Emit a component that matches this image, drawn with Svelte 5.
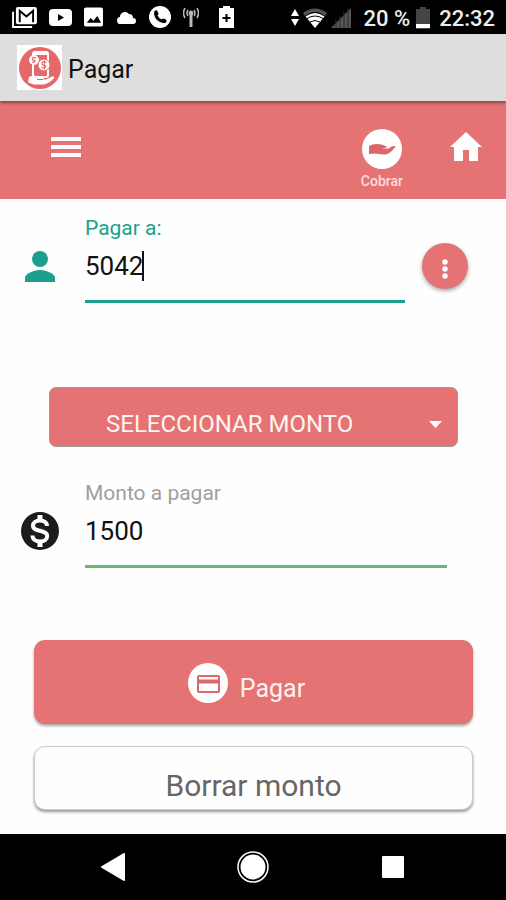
<script lang="ts">
  let payee = $state('5042');
  let amount = $state('1500');
  let preset = $state('');

  const presets = ['500', '1000', '1500', '2000'];

  function choosePreset() {
    if (preset) amount = preset;
  }

  function clearAmount() {
    amount = '';
    preset = '';
  }
</script>

<div class="screen">
  <div class="status">
    <div class="notifications">
      <svg width="25" height="21" viewBox="0 0 26 22" aria-hidden="true">
        <path d="M1 5v16h20" fill="none" stroke="#fff" stroke-width="2" />
        <rect x="4" y="0" width="22" height="18" rx="2" fill="#fff" />
        <path d="M8 16V4l7 6 7-6v12" fill="none" stroke="#000" stroke-width="2" />
      </svg>
      <svg width="23" height="17" viewBox="0 0 23 17" aria-hidden="true">
        <rect width="23" height="17" rx="4" fill="#fff" />
        <path d="M9 5v7l6-3.500z" fill="#000" />
      </svg>
      <svg width="19" height="20" viewBox="0 0 20 20" aria-hidden="true">
        <rect width="20" height="20" rx="2" fill="#fff" />
        <path d="M3 16l4-5 3 3 4-5 4 7z" fill="#000" />
      </svg>
      <svg width="22" height="13" viewBox="0 0 22 13" aria-hidden="true">
        <path d="M4 13a4 4 0 0 1 0-7h1a5 5 0 0 1 9-3q4 0 4 4a3 3 0 0 1 0 6z" fill="#fff" />
      </svg>
      <svg width="22" height="22" viewBox="0 0 22 22" aria-hidden="true">
        <circle cx="11" cy="11" r="11" fill="#fff" />
        <path d="M5.500 5q2-1.500 3 .2l1 2.300q.2 1-1 1.800 1.300 3 4.200 4.200 1-1.200 1.800-1l2.300 1q1.600 1 .2 3-1.500 1-4 .2-6.500-2-7.800-8-.4-2.500.3-3.700z" fill="#000" />
      </svg>
      <svg width="16" height="19" viewBox="0 0 16 19" fill="none" stroke="#bbb" aria-hidden="true">
        <path d="M8 6v13" stroke-width="3" />
        <circle cx="8" cy="5" r="2" fill="#bbb" />
        <path d="M5 2q-2 3 0 6M11 2q2 3 0 6M2 0q-3 5 0 10M14 0q3 5 0 10" stroke-width="1.500" />
      </svg>
      <svg width="15" height="22" viewBox="0 0 15 22" aria-hidden="true">
        <path d="M4 0h7v2h4v20H0V2h4z" fill="#fff" />
        <path d="M7.500 8v8M3.500 12h8" stroke="#000" stroke-width="2" />
      </svg>
    </div>
    <div class="system">
      <svg width="8" height="18" viewBox="0 0 8 18" aria-hidden="true">
        <path d="M4 0l4 7H0zM4 17l4-7H0z" fill="#fff" />
      </svg>
      <svg class="wifi" width="24" height="20" viewBox="0 0 24 20" aria-hidden="true">
        <path d="M0 5q12-9 24 0l-2 3q-10-8-20 0z" fill="#555" />
        <path d="M12 20L2.500 8.500q9.500-7 19 0z" fill="#fff" />
        <path d="M4 10.500q8-5 16 0M7 14q5-3 10 0" fill="none" stroke="#000" />
      </svg>
      <svg class="signal" width="20" height="20" viewBox="0 0 20 20" aria-hidden="true">
        <path d="M0 20L20 0v20z" fill="#555" />
        <path d="M5 12v8M9 8v12M13 4v16M17 0v20" stroke="#2b2b2b" />
      </svg>
      <span>20 %</span>
      <svg class="battery" width="14" height="22" viewBox="0 0 14 22" aria-hidden="true">
        <path d="M4 0h6v2h4v20H0V2h4z" fill="#444" />
        <path d="M0 17h14v4H0z" fill="#fff" />
      </svg>
      <time>22:32</time>
    </div>
  </div>

  <div class="titlebar">
    <svg width="45" height="45" viewBox="0 0 45 45" aria-hidden="true">
      <rect width="45" height="45" fill="#fff" />
      <circle cx="23" cy="23" r="21" fill="#e4686a" />
      <rect x="16" y="7" width="15" height="25" rx="2" fill="none" stroke="#fff" stroke-width="2" />
      <path d="M17 9h13" stroke="#fff" stroke-width="2" />
      <circle cx="17" cy="15" r="5" fill="#fff" />
      <circle cx="27" cy="20" r="6" fill="#fff" stroke="#e4686a" />
      <path d="M19 13q-3-1.500-3.500.5t2.500 1.800q0 3-3 1.500M29.500 17.500q-4-2-4.500.5t4 3q-.5 3-4.500 1.500M27.500 15.500v9" fill="none" stroke="#e4686a" stroke-width="1.200" />
      <path d="M12 32q4-2 8-1l6 1q2 1 0 2.500h3l6-3q3-.5 2 1.500-4 5-10 6.500H17l-6-2z" fill="#fff" />
      <path d="M20 34.500h6" stroke="#e4686a" />
    </svg>
    <h1>Pagar</h1>
  </div>

  <header>
    <button class="bare" type="button" aria-label="Menú">
      <svg width="30" height="20" viewBox="0 0 30 20" aria-hidden="true">
        <path d="M0 2h30M0 10h30M0 18h30" stroke="#fff" stroke-width="4" />
      </svg>
    </button>
    <a class="charge" href="#cobrar">
      <svg width="40" height="40" viewBox="0 0 40 40" aria-hidden="true">
        <circle cx="20" cy="20" r="20" fill="#fff" />
        <path d="M7 17q3-2 8-2 5 0 7 1.500 2 .7 3 1-1 1.500-5 1.500 4 1 7 .2 3-2.500 6-2.200 1 .6-1 2.500-4 5-8 6-6 0-11-1l-6 .5z" fill="#dc6668" />
      </svg>
      <span>Cobrar</span>
    </a>
    <a class="home" href="#inicio" aria-label="Inicio">
      <svg width="32" height="29" viewBox="0 0 32 29" aria-hidden="true">
        <path d="M16 0l16 15h-4v14h-9V18h-6v11H4V15H0z" fill="#fff" />
      </svg>
    </a>
  </header>

  <main>
    <div class="row payee">
      <label for="payee">Pagar a:</label>
      <span class="icon">
        <svg width="30" height="31" viewBox="0 0 30 31" fill="#1aa08c" aria-hidden="true">
          <circle cx="15" cy="8" r="8" />
          <path d="M0 31v-4c0-5 10-8 15-8s15 3 15 8v4z" />
        </svg>
      </span>
      <div class="entry">
        <input id="payee" type="text" inputmode="numeric" autocomplete="off" bind:value={payee} />
        <i class="caret" style:left="{payee.length}ch"></i>
      </div>
      <button class="more" type="button" aria-label="Más opciones">
        <svg width="6" height="20" viewBox="0 0 6 20" fill="#fff" aria-hidden="true">
          <circle cx="3" cy="3" r="2.700" />
          <circle cx="3" cy="10" r="2.700" />
          <circle cx="3" cy="17" r="2.700" />
        </svg>
      </button>
    </div>

    <div class="preset">
      <select aria-label="Seleccionar monto" bind:value={preset} onchange={choosePreset}>
        <option value="">SELECCIONAR MONTO</option>
        {#each presets as value (value)}
          <option {value}>{value}</option>
        {/each}
      </select>
      <svg width="13" height="7" viewBox="0 0 13 7" aria-hidden="true">
        <path d="M0 0h13L6.500 7z" fill="#fff" />
      </svg>
    </div>

    <div class="row amount">
      <label for="amount">Monto a pagar</label>
      <span class="icon">
        <svg width="38" height="38" viewBox="0 0 38 38" aria-hidden="true">
          <circle cx="19" cy="19" r="19" fill="#1c1b1e" />
          <g fill="none" stroke="#fff">
            <path d="M26 14c0-3.500-3-5.500-7-5.500s-7 2-7 5.200c0 6.800 14.200 3.300 14.200 10.300 0 3.500-3.200 5.500-7.200 5.500s-7.500-2-7.500-6" stroke-width="4" />
            <path d="M19 3v6M19 29v6" stroke-width="5" />
          </g>
        </svg>
      </span>
      <div class="entry">
        <input id="amount" type="text" inputmode="numeric" autocomplete="off" bind:value={amount} />
      </div>
    </div>

    <div class="actions">
      <button class="pay" type="button">
        <svg width="40" height="40" viewBox="0 0 40 40" aria-hidden="true">
          <circle cx="20" cy="20" r="20" fill="#fff" />
          <rect x="10" y="13" width="21" height="16" rx="1" fill="none" stroke="#dc6668" stroke-width="2" />
          <path d="M10 18.500h21" stroke="#dc6668" stroke-width="4" />
        </svg>
        <span>Pagar</span>
      </button>
      <button class="clear" type="button" onclick={clearAmount}>Borrar monto</button>
    </div>
  </main>

  <nav>
    <button class="bare" type="button" aria-label="Atrás">
      <svg width="24" height="28" viewBox="0 0 24 28" aria-hidden="true">
        <path d="M23 1v26L1 14z" fill="#fff" stroke="#fff" stroke-width="2" stroke-linejoin="round" />
      </svg>
    </button>
    <button class="bare" type="button" aria-label="Pantalla de inicio">
      <svg width="32" height="32" viewBox="0 0 32 32" aria-hidden="true">
        <circle cx="16" cy="16" r="15" fill="none" stroke="#fff" stroke-width="1.500" />
        <circle cx="16" cy="16" r="12.500" fill="#fff" />
      </svg>
    </button>
    <button class="bare" type="button" aria-label="Recientes">
      <svg width="22" height="22" viewBox="0 0 22 22" aria-hidden="true">
        <rect width="22" height="22" rx="1" fill="#fff" />
      </svg>
    </button>
  </nav>
</div>

<style>
  :global(body) { margin: 0; background: #fefefe; }
  .screen {
    display: flex;
    flex-direction: column;
    min-height: 100vh;
    font-family: Roboto, sans-serif;
    color: #111;
  }
  svg { display: block; flex-shrink: 0; }
  button, input, select { font-family: inherit; box-sizing: border-box; }
  button { cursor: pointer; }
  .bare {
    display: flex;
    padding: 0;
    border: none;
    background: none;
  }

  .status {
    display: flex;
    justify-content: space-between;
    align-items: center;
    height: 34px;
    padding: 0 11px 0 12px;
    background: #000;
    color: #eee;
    font-size: 22px;
    font-weight: 500;
    white-space: nowrap;
  }
  .notifications { display: flex; align-items: center; gap: 12px; }
  .notifications svg:last-child { margin-left: 8px; }
  .system { display: flex; align-items: center; padding-top: 2px; }
  .wifi { margin: 0 4px; }
  .signal { margin-right: 12px; }
  .battery { margin: 0 9px 0 6px; }

  .titlebar {
    position: relative;
    display: flex;
    align-items: center;
    gap: 6px;
    height: 67px;
    padding: 0 17px;
    background: #dedede;
    box-shadow: 0 1px 4px rgba(0, 0, 0, 0.6);
  }
  h1 {
    margin: 0;
    padding-top: 4px;
    font-size: 25px;
    font-weight: 400;
  }

  header {
    display: flex;
    align-items: flex-start;
    height: 98px;
    padding: 0 24px 0 51px;
    box-sizing: border-box;
    background: #e57373;
  }
  header .bare { margin: 36px auto 0 0; }
  .charge {
    display: flex;
    flex-direction: column;
    align-items: center;
    gap: 4px;
    margin: 28px 47px 0 0;
    color: #fbdcdc;
    font-size: 14px;
    font-weight: 500;
    line-height: 16px;
    text-decoration: none;
  }
  .home { margin-top: 31px; }

  main { flex: 1; padding: 17px 0 21px; }
  .row {
    display: grid;
    grid-template-columns: 40px 1fr auto;
    column-gap: 25px;
    padding-left: 20px;
  }
  .payee { padding-right: 38px; }
  .amount { padding-right: 34px; }
  label {
    grid-column: 2 / -1;
    font-size: 21px;
    line-height: 24px;
  }
  .payee label { color: #1aa08c; }
  .amount label { color: #9e9e9e; }
  .icon {
    grid-column: 1;
    display: flex;
    align-items: center;
    justify-content: center;
    height: 52px;
  }
  .entry { position: relative; font-size: 26px; }
  input {
    display: block;
    width: 100%;
    height: 63px;
    padding: 0 0 8px;
    border: none;
    border-bottom: 3px solid #1aa08c;
    outline: none;
    background: none;
    color: #111;
    font-size: 26px;
  }
  .payee input { caret-color: transparent; }
  .amount input { border-color: #66bb6a; }
  .caret {
    position: absolute;
    top: 11px;
    width: 2px;
    height: 30px;
    background: #111;
  }
  .more {
    display: flex;
    align-items: center;
    justify-content: center;
    width: 46px;
    height: 46px;
    margin: 3px 0 0 -8px;
    padding: 5px 0 0;
    border: none;
    border-radius: 50%;
    background: #e57373;
    box-shadow: 0 2px 4px rgba(0, 0, 0, 0.35);
  }

  .preset {
    display: grid;
    align-items: center;
    margin: 84px 48px 34px 49px;
  }
  .preset select, .preset svg { grid-area: 1 / 1; }
  .preset svg {
    justify-self: end;
    margin: 14px 16px 0 0;
    pointer-events: none;
  }
  select {
    width: 100%;
    height: 60px;
    padding: 14px 48px 0 56px;
    border: 1px solid #999;
    border-radius: 7px;
    appearance: none;
    background: #e57373;
    color: #fff3f0;
    font-size: 24px;
  }

  .actions {
    display: grid;
    gap: 22px;
    margin: 72px 33px 0 34px;
  }
  .pay, .clear { border-radius: 11px; }
  .pay {
    display: flex;
    align-items: center;
    justify-content: center;
    gap: 12px;
    height: 84px;
    padding: 2px 14px 0 0;
    border: none;
    background: #e57373;
    color: #fff3f0;
    font-size: 25px;
    box-shadow: 0 2px 3px rgba(0, 0, 0, 0.35);
  }
  .pay span { padding-top: 10px; }
  .clear {
    height: 64px;
    padding: 14px 0 0;
    border: 1px solid #ccc;
    background: #fefefe;
    color: #666;
    font-size: 30px;
    box-shadow: 0 2px 3px rgba(0, 0, 0, 0.4);
  }

  nav {
    display: grid;
    grid-template-columns: repeat(3, 1fr);
    align-items: center;
    justify-items: center;
    height: 66px;
    padding: 0 43px;
    background: #000;
  }
</style>
